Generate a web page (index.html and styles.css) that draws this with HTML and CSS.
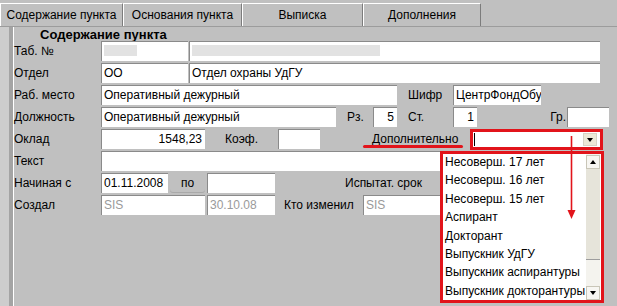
FILE: index.html
```html
<!DOCTYPE html>
<html lang="ru">
<head>
  <meta charset="UTF-8" />
  <title>Содержание пункта</title>
  <link rel="stylesheet" href="styles.css">
</head>
<body>
  <div class="window">
    <div class="tabs">
      <div class="tab tab-main active">Содержание пункта</div>
      <div class="tab tab-base">Основания пункта</div>
      <div class="tab tab-extract">Выписка</div>
      <div class="tab tab-extra">Дополнения</div>
    </div>

    <div class="panel">
      <div class="caption">Содержание пункта</div>

      <div class="row">
        <span class="lbl">Таб. №</span>
        <div class="fld f-code"><span class="masked mask-short"></span></div>
        <div class="fld f-name"><span class="masked mask-long"></span></div>
      </div>

      <div class="row">
        <span class="lbl">Отдел</span>
        <div class="fld f-code">ОО</div>
        <div class="fld f-name">Отдел охраны УдГУ</div>
      </div>

      <div class="row">
        <span class="lbl">Раб. место</span>
        <div class="fld f-place">Оперативный дежурный</div>
        <span class="cap cap-cipher">Шифр</span>
        <div class="fld f-cipher">ЦентрФондОбу</div>
      </div>

      <div class="row">
        <span class="lbl">Должность</span>
        <div class="fld f-post">Оперативный дежурный</div>
        <span class="cap cap-rz">Рз.</span>
        <div class="fld f-small num">5</div>
        <span class="cap cap-cipher">Ст.</span>
        <div class="fld f-small num">1</div>
        <span class="cap cap-gr">Гр.</span>
        <div class="fld f-gr"></div>
      </div>

      <div class="row">
        <span class="lbl">Оклад</span>
        <div class="fld f-sum num">1548,23</div>
        <span class="cap cap-koef">Коэф.</span>
        <div class="fld f-koef"></div>
        <span class="cap cap-more"><span class="link">Дополнительно</span></span>
        <div class="combo">
          <div class="combo-text"><span class="caret"></span></div>
          <div class="combo-btn"><span class="tri-down"></span></div>
        </div>
      </div>

      <div class="row">
        <span class="lbl">Текст</span>
        <div class="fld f-text"></div>
      </div>

      <div class="row">
        <span class="lbl">Начиная с</span>
        <div class="fld f-date">01.11.2008</div>
        <span class="cap cap-to">по</span>
        <div class="fld f-date2"></div>
        <span class="cap cap-trial">Испытат. срок</span>
      </div>

      <div class="row">
        <span class="lbl">Создал</span>
        <div class="fld f-sum dim">SIS</div>
        <div class="fld f-date2 dim">30.10.08</div>
        <span class="cap cap-changed">Кто изменил</span>
        <div class="fld f-user dim">SIS</div>
      </div>
    </div>

    <!-- open list of the "Дополнительно" combo -->
    <div class="droplist">
      <ul class="items">
        <li>Несоверш. 17 лет</li>
        <li>Несоверш. 16 лет</li>
        <li>Несоверш. 15 лет</li>
        <li>Аспирант</li>
        <li>Докторант</li>
        <li>Выпускник УдГУ</li>
        <li>Выпускник аспирантуры</li>
        <li>Выпускник докторантуры</li>
      </ul>
      <div class="scroll">
        <div class="sbtn"><span class="tri-up"></span></div>
        <div class="thumb"></div>
        <div class="track"></div>
        <div class="sbtn"><span class="tri-down"></span></div>
      </div>
    </div>

    <div class="underline"></div>
    <svg class="pointer" width="11" height="84" viewBox="0 0 11 84">
      <line x1="5.5" y1="0" x2="5.5" y2="76" stroke="#e2141b" stroke-width="1.6" />
      <polygon points="1.5,74 9.5,74 5.5,83" fill="#e2141b" />
    </svg>
  </div>
</body>
</html>
```

FILE: styles.css
```css
:root {
  --face: #c0c0c0;
  --shadow: #8a8a8a;
  --light: #ffffff;
  --mark: #e2141b;
  --xp: #ece9d8;
}

body {
  margin: 0;
  font-family: "Liberation Sans", Arial, sans-serif;
  font-size: 12px;
  color: #000;
  background: var(--face);
}

.window {
  position: relative;
  width: 617px;
  height: 306px;
  overflow: hidden;
  background: linear-gradient(to right, #cdcdcd 0 9px, var(--face) 9px);
}

/* Tabs */
.tabs {
  display: flex;
  height: 26px;
  border-bottom: 1px solid #9c9c9c;
  background: var(--face);
}

.tab {
  box-sizing: border-box;
  margin-top: 3px;
  height: 23px;
  line-height: 22px;
  text-align: center;
  border-top: 1px solid var(--light);
  border-left: 1px solid var(--light);
  border-right: 1px solid #7c7c7c;
  white-space: nowrap;
}

.tab-main { width: 123px; }
.tab-base { width: 119px; }
.tab-extract { width: 121px; }
.tab-extra { width: 118px; }

/* Panel */
.panel {
  margin-left: 9px;
  height: 279px;
  border-left: 4px solid #a4a4a4;
  box-shadow: inset 1px 0 0 var(--light);
}

.caption {
  height: 14px;
  line-height: 15px;
  padding-left: 27px;
  font-weight: bold;
  font-size: 13px;
}

.row {
  display: flex;
  align-items: flex-start;
  height: 20px;
  margin-bottom: 2px;
}

.lbl {
  width: 87px;
  padding-left: 1px;
  line-height: 20px;
  white-space: nowrap;
}

.cap {
  box-sizing: border-box;
  line-height: 20px;
  white-space: nowrap;
}

.fld {
  box-sizing: border-box;
  height: 20px;
  padding-left: 2px;
  line-height: 18px;
  background: var(--light);
  border-top: 1px solid var(--shadow);
  border-left: 1px solid var(--shadow);
  white-space: nowrap;
  overflow: hidden;
}

.fld.num {
  text-align: right;
  padding-right: 3px;
}

.fld.dim {
  color: #9a9a9a;
}

.masked {
  display: inline-block;
  height: 11px;
  margin-top: 3px;
  background: #e2e2e2;
}

.mask-short { width: 33px; }
.mask-long { width: 188px; }

.f-code { width: 87px; }
.f-name { width: 411px; margin-left: 1px; }
.f-place { width: 296px; }
.f-cipher { width: 88px; }
.f-post { width: 235px; }
.f-small { width: 24px; }
.f-gr { width: 42px; }
.f-sum { width: 104px; }
.f-koef { width: 42px; }
.f-text { width: 499px; }
.f-date { width: 67px; }
.f-date2 { width: 68px; margin-left: 2px; }
.f-user { width: 77px; }

.cap-cipher { width: 56px; padding-left: 11px; }
.cap-rz { width: 37px; padding-left: 11px; }
.cap-gr { width: 90px; padding-right: 1px; text-align: right; }
.cap-koef { width: 73px; text-align: center; }
.cap-more { width: 150px; padding-left: 52px; }
.cap-to {
  width: 35px;
  height: 20px;
  margin-left: 2px;
  text-align: center;
  border-radius: 0 0 3px 3px;
  box-shadow: inset 0 -1px 0 #a9a9a9;
}
.cap-trial { padding-left: 70px; }
.cap-changed { width: 88px; padding-left: 9px; }

.link {
  text-decoration: underline;
  text-underline-offset: 2px;
}

/* Combo box (highlighted) */
.combo {
  box-sizing: border-box;
  display: flex;
  width: 133px;
  height: 21px;
  border: 3px solid var(--mark);
  background: var(--light);
}

.combo-text {
  flex: 1;
  position: relative;
}

.caret {
  position: absolute;
  left: 1px;
  top: 1px;
  width: 1px;
  height: 13px;
  background: #000;
}

.combo-btn {
  width: 12px;
  margin: 1px 3px 1px 0;
  background: var(--xp);
  border: 1px solid #d6d3c6;
  display: flex;
  align-items: center;
  justify-content: center;
}

.tri-down,
.tri-up {
  width: 0;
  height: 0;
  border-left: 3.5px solid transparent;
  border-right: 3.5px solid transparent;
}

.tri-down { border-top: 4px solid #000; }
.tri-up { border-bottom: 4px solid #000; }

/* Open list */
.droplist {
  position: absolute;
  left: 440px;
  top: 151px;
  box-sizing: border-box;
  width: 164px;
  height: 152px;
  display: flex;
  border: 3px solid var(--mark);
  background: var(--light);
}

.items {
  flex: 1;
  margin: -1px 0 0 0;
  padding: 0 0 0 2px;
  list-style: none;
  line-height: 18.4px;
  white-space: nowrap;
  overflow: hidden;
}

.scroll {
  width: 14px;
  margin-right: 1px;
  display: flex;
  flex-direction: column;
  background: #f4f3ee;
}

.sbtn {
  box-sizing: border-box;
  height: 14px;
  margin-top: 1px;
  display: flex;
  align-items: center;
  justify-content: center;
  background: #f7f6f2;
  border: 1px solid #c9c6b8;
}

.thumb {
  height: 90px;
  background: #e6e4da;
  border-bottom: 1px solid #9d9d9d;
}

.track {
  flex: 1;
}

/* Annotations */
.underline {
  position: absolute;
  left: 363px;
  top: 145px;
  width: 100px;
  height: 3px;
  border-radius: 2px;
  background: var(--mark);
}

.pointer {
  position: absolute;
  left: 566px;
  top: 136px;
}
```
